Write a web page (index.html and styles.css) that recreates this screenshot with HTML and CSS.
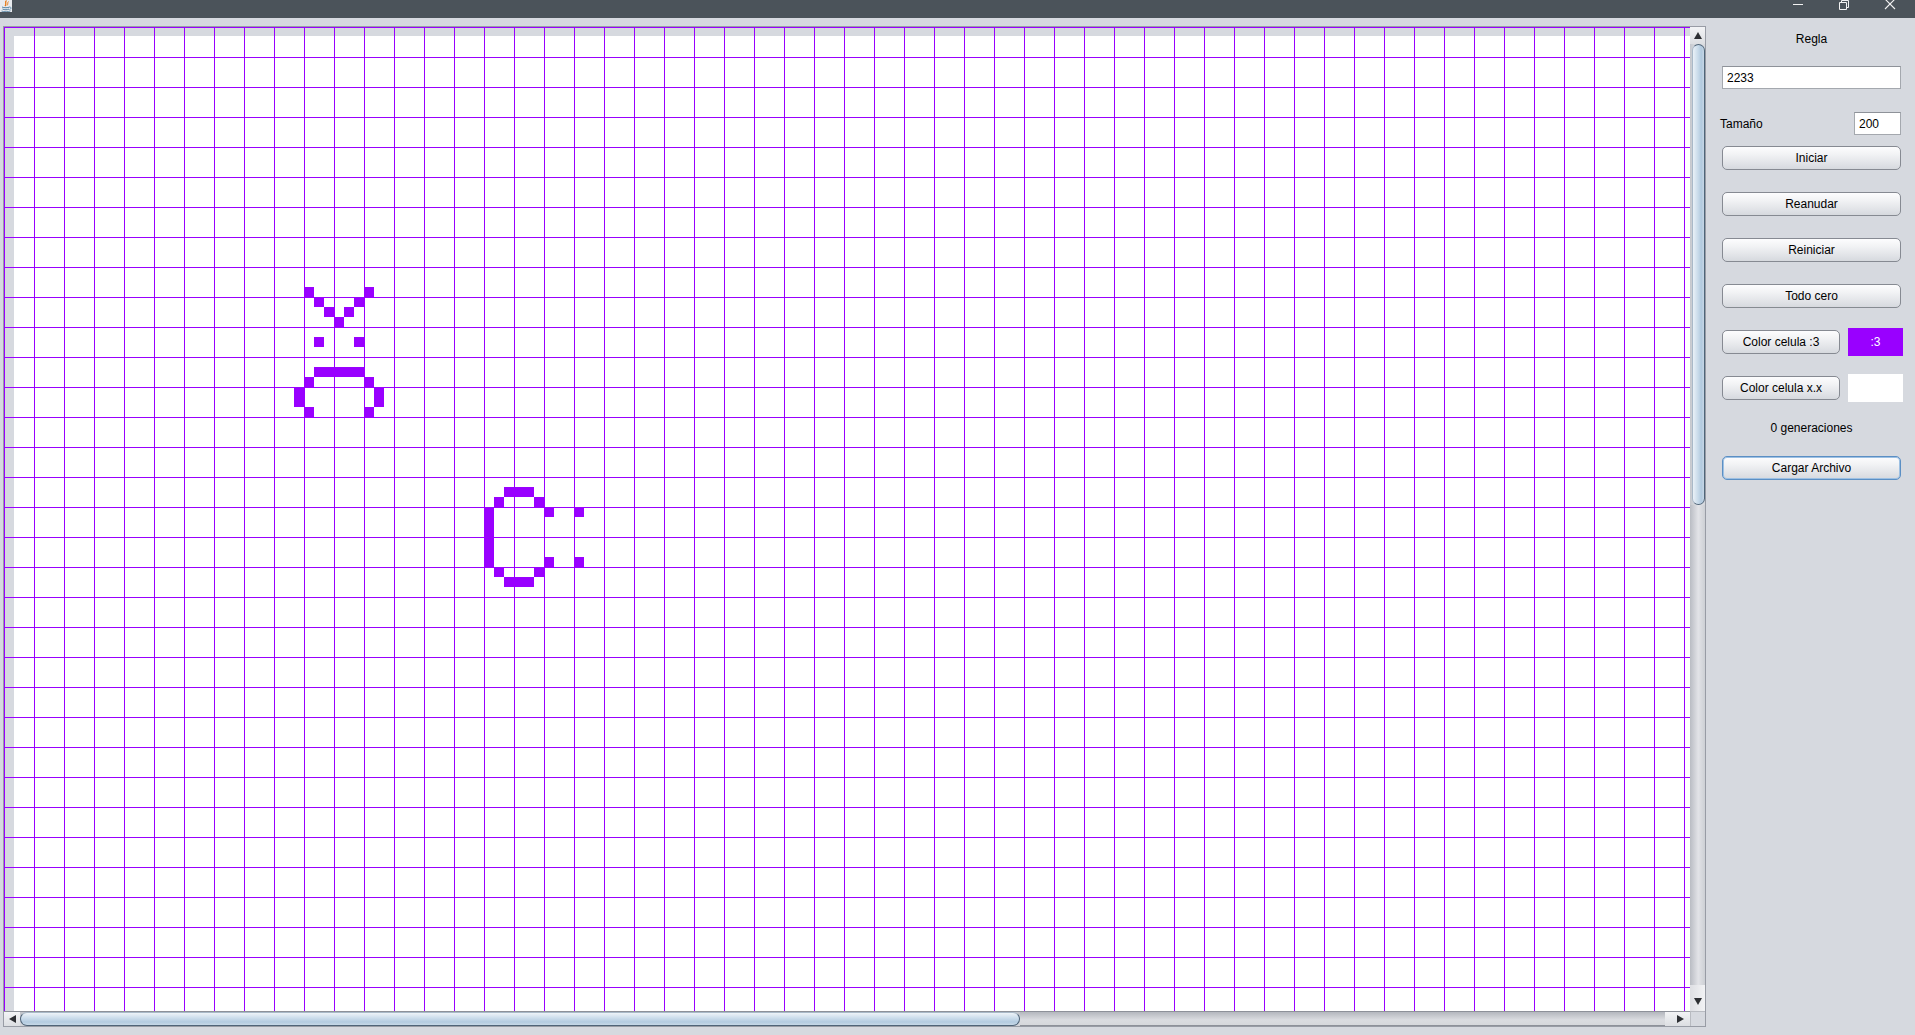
FILE: index.html
```html
<!DOCTYPE html>
<html lang="es">
<head>
<meta charset="utf-8">
<title>Juego de la vida</title>
<link rel="stylesheet" href="styles.css">
</head>
<body>
<div class="titlebar">
  <div class="app-icon">
    <svg width="12" height="12" viewBox="0 0 12 12">
      <rect x="0" y="0" width="12" height="12" fill="#e9ebee"/>
      <path d="M6.5 0.5 C4 2.5 7.5 3.5 5 6" stroke="#e76f00" stroke-width="1.2" fill="none"/>
      <path d="M8.5 1.5 C7 3 8.5 4 7 5.5" stroke="#e76f00" stroke-width="0.9" fill="none"/>
      <path d="M2 7 C4 8 8 8 9.5 7" stroke="#5382a1" stroke-width="1" fill="none"/>
      <path d="M2.5 9 C4.5 10 7.5 10 9 9" stroke="#5382a1" stroke-width="1" fill="none"/>
      <path d="M9.5 7 C11.5 7 11.5 9 9.5 9.5" stroke="#5382a1" stroke-width="0.9" fill="none"/>
      <path d="M1.5 11 C4 12 8.5 12 10.5 10.8" stroke="#5382a1" stroke-width="0.9" fill="none"/>
    </svg>
  </div>
  <div class="controls">
    <span class="ctl">
      <svg width="12" height="10" viewBox="0 0 12 10"><rect x="1" y="4" width="10" height="1" fill="#f2f2f2"/></svg>
    </span>
    <span class="ctl">
      <svg width="12" height="10" viewBox="0 0 12 10"><path d="M1.5 2.5 H8.5 V9.5 H1.5 Z" stroke="#f2f2f2" fill="none"/><path d="M3.5 2.5 V0.5 H10.5 V7.5 H8.5" stroke="#f2f2f2" fill="none"/></svg>
    </span>
    <span class="ctl">
      <svg width="12" height="10" viewBox="0 0 12 10"><path d="M1 -1 L11 9 M11 -1 L1 9" stroke="#f2f2f2" stroke-width="1.1" fill="none"/></svg>
    </span>
  </div>
</div>

<div class="main">
  <div class="scrollpane">
    <div class="viewport">
      <svg class="board" width="1686" height="984" viewBox="0 0 1686 984">
        <defs>
          <pattern id="grid" width="30" height="30" patternUnits="userSpaceOnUse">
            <rect x="0" y="0" width="1" height="30" fill="#9900ff"/>
            <rect x="0" y="0" width="30" height="1" fill="#9900ff"/>
          </pattern>
        </defs>
        <rect x="0" y="0" width="1686" height="984" fill="#d6d9df"/>
        <rect x="10" y="9" width="1676" height="975" fill="#ffffff"/>
        <rect x="0" y="0" width="1686" height="984" fill="url(#grid)"/>
        <g fill="#9900ff">
          <!-- face -->
          <rect x="300" y="260" width="10" height="10"/>
          <rect x="360" y="260" width="10" height="10"/>
          <rect x="310" y="270" width="10" height="10"/>
          <rect x="350" y="270" width="10" height="10"/>
          <rect x="320" y="280" width="10" height="10"/>
          <rect x="340" y="280" width="10" height="10"/>
          <rect x="330" y="290" width="10" height="10"/>
          <rect x="310" y="310" width="10" height="10"/>
          <rect x="350" y="310" width="10" height="10"/>
          <rect x="310" y="340" width="50" height="10"/>
          <rect x="300" y="350" width="10" height="10"/>
          <rect x="360" y="350" width="10" height="10"/>
          <rect x="290" y="360" width="10" height="20"/>
          <rect x="370" y="360" width="10" height="20"/>
          <rect x="300" y="380" width="10" height="10"/>
          <rect x="360" y="380" width="10" height="10"/>
          <!-- C: -->
          <rect x="500" y="460" width="30" height="10"/>
          <rect x="490" y="470" width="10" height="10"/>
          <rect x="530" y="470" width="10" height="10"/>
          <rect x="480" y="480" width="10" height="60"/>
          <rect x="540" y="480" width="10" height="10"/>
          <rect x="570" y="480" width="10" height="10"/>
          <rect x="540" y="530" width="10" height="10"/>
          <rect x="570" y="530" width="10" height="10"/>
          <rect x="490" y="540" width="10" height="10"/>
          <rect x="530" y="540" width="10" height="10"/>
          <rect x="500" y="550" width="30" height="10"/>
        </g>
      </svg>
    </div>
    <div class="vscroll">
      <div class="sbtn up"><span class="tri tri-up"></span></div>
      <div class="vthumb"></div>
      <div class="vtrack"></div>
      <div class="sbtn down"><span class="tri tri-down"></span></div>
    </div>
    <div class="hscroll">
      <div class="sbtn left"><span class="tri tri-left"></span></div>
      <div class="hthumb"></div>
      <div class="htrack"></div>
      <div class="sbtn right"><span class="tri tri-right"></span></div>
    </div>
    <div class="corner"></div>
  </div>

  <div class="panel">
    <div class="label center first">Regla</div>
    <div class="field wide">2233</div>
    <div class="row size-row">
      <span class="label">Tamaño</span>
      <div class="field small">200</div>
    </div>
    <button class="btn gap-s">Iniciar</button>
    <button class="btn gap-m">Reanudar</button>
    <button class="btn gap-m">Reiniciar</button>
    <button class="btn gap-m">Todo cero</button>
    <div class="row color-row first-color">
      <button class="btn color-btn">Color celula :3</button>
      <div class="swatch purple">:3</div>
    </div>
    <div class="row color-row second-color">
      <button class="btn color-btn">Color celula x.x</button>
      <div class="swatch white"></div>
    </div>
    <div class="label center gens">0 generaciones</div>
    <button class="btn focused load">Cargar Archivo</button>
  </div>
</div>
</body>
</html>
```

FILE: styles.css
```css
* { box-sizing: border-box; }

html, body {
  margin: 0;
  padding: 0;
}

body {
  width: 1915px;
  height: 1035px;
  overflow: hidden;
  background: #d6d9df;
  font-family: "Liberation Sans", Arial, sans-serif;
  font-size: 12px;
  color: #000;
}

/* ---------- title bar ---------- */
.titlebar {
  height: 18px;
  background: #4b535a;
  display: flex;
  justify-content: space-between;
  align-items: flex-start;
  overflow: hidden;
}

.app-icon {
  width: 12px;
  height: 12px;
  display: flex;
}

.controls {
  display: flex;
  padding-right: 2px;
}

.ctl {
  width: 46px;
  height: 10px;
  display: flex;
  justify-content: center;
  align-items: flex-start;
}

/* ---------- main area ---------- */
.main {
  display: flex;
  align-items: flex-start;
}

.scrollpane {
  margin: 8px 0 0 3px;
  border: 1px solid #989ca5;
  display: grid;
  grid-template-columns: 1686px 15px;
  grid-template-rows: 984px 15px;
  background: #d6d9df;
}

.viewport {
  width: 1686px;
  height: 984px;
  overflow: hidden;
}

.board { display: block; }

/* ---------- scrollbars ---------- */
.vscroll {
  display: flex;
  flex-direction: column;
  background: linear-gradient(to right, #c4c7cd, #e6e7ea 60%, #d4d6db);
}

.hscroll {
  display: flex;
  background: linear-gradient(to bottom, #bfc2c8, #dedfe3 60%, #d0d2d7);
  border-top: 1px solid #8d9199;
}

.sbtn {
  display: flex;
  align-items: center;
  justify-content: center;
  background: linear-gradient(to bottom, #f3f4f6, #dcdee2);
  flex: none;
}

.vscroll .sbtn { height: 17px; }
.vscroll .sbtn.down { height: 26px; align-items: flex-end; padding-bottom: 6px; background: linear-gradient(to right, #dedfe3, #f2f3f5); }
.hscroll .sbtn.left { width: 16px; }
.hscroll .sbtn.right { width: 25px; justify-content: flex-end; padding-right: 6px; background: linear-gradient(to bottom, #f2f3f5, #dcdee2); }

.tri { width: 0; height: 0; display: block; }
.tri-up { border-left: 4px solid transparent; border-right: 4px solid transparent; border-bottom: 7px solid #2d2f33; }
.tri-down { border-left: 4px solid transparent; border-right: 4px solid transparent; border-top: 7px solid #2d2f33; }
.tri-left { border-top: 4px solid transparent; border-bottom: 4px solid transparent; border-right: 7px solid #2d2f33; }
.tri-right { border-top: 4px solid transparent; border-bottom: 4px solid transparent; border-left: 7px solid #2d2f33; }

.vthumb {
  height: 461px;
  flex: none;
  margin-left: 2px;
  border: 1px solid #4f6478;
  border-left-color: #a9b9c8;
  border-radius: 8px;
  background: linear-gradient(to right, #eaf1f7, #c9dbea 45%, #b1c9de 75%, #c6d7e6);
}

.vtrack {
  flex: 1;
  background: linear-gradient(to right, #b9bcc3, #e2e3e7 55%, #cdd0d5);
}

.hthumb {
  width: 1000px;
  flex: none;
  border: 1px solid #4f6478;
  border-top-color: #a9b9c8;
  border-radius: 8px;
  background: linear-gradient(to bottom, #eef3f8, #cddeec 40%, #b3cbe0 75%, #c7d8e7);
}

.htrack {
  flex: 1;
  border-bottom: 1px solid #8d9199;
  background: linear-gradient(to bottom, #b4b7be, #dadce0 60%, #d6d8dc);
}

.corner {
  background: #d6d9df;
  border-left: 1px solid #b8bbc1;
  border-top: 1px solid #b8bbc1;
}

/* ---------- control panel ---------- */
.panel {
  width: 209px;
  padding: 0 14px 0 16px;
  display: flex;
  flex-direction: column;
}

.label {
  line-height: 15px;
  height: 15px;
  white-space: nowrap;
}

.label.center { text-align: center; }
.label.first { margin-top: 14px; }
.label.gens { margin-top: 19px; }

.field {
  height: 23px;
  background: #fff;
  border: 1px solid #a4a8ae;
  border-top-color: #8e9299;
  padding: 1px 4px 0;
  line-height: 21px;
}

.field.wide { margin-top: 19px; width: 179px; }
.field.small { width: 47px; }

.row {
  display: flex;
  align-items: center;
}

.size-row {
  margin-top: 23px;
  margin-left: -2px;
  width: 181px;
  height: 23px;
  justify-content: space-between;
}

.size-row .label { padding-top: 1px; height: 16px; }

.btn {
  font-family: "Liberation Sans", Arial, sans-serif;
  font-size: 12px;
  color: #000;
  width: 179px;
  height: 24px;
  padding: 0;
  border: 1px solid #868a92;
  border-radius: 5px;
  background: linear-gradient(to bottom, #fdfdfe 0%, #f1f2f4 35%, #e3e5e9 70%, #d6d9de 100%);
  flex: none;
  line-height: 22px;
  text-align: center;
}

.btn.gap-s { margin-top: 11px; }
.btn.gap-m { margin-top: 22px; }

.color-row {
  height: 28px;
  width: 181px;
  gap: 8px;
}

.first-color { margin-top: 20px; }
.second-color { margin-top: 18px; }

.btn.color-btn { width: 118px; }

.swatch {
  width: 55px;
  height: 28px;
  flex: none;
  display: flex;
  align-items: center;
  justify-content: center;
  color: #fff;
}

.swatch.purple { background: #9900ff; }
.swatch.white { background: #ffffff; }

.btn.focused {
  border-color: #5b8fc4;
  box-shadow: inset 0 0 0 1px #9dc0e3;
}

.btn.load { margin-top: 20px; }
```
